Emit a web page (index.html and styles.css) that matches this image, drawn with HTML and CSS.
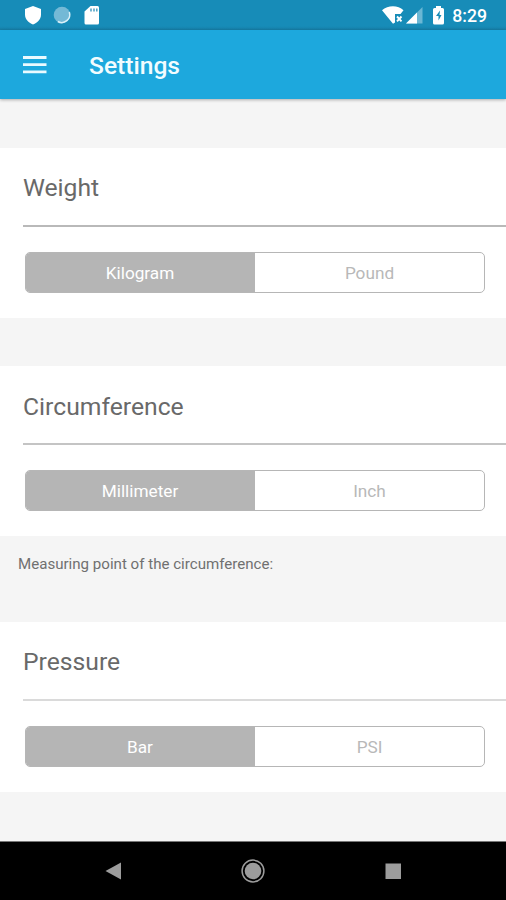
FILE: index.html
```html
<!DOCTYPE html>
<html lang="en">
<head>
<meta charset="utf-8">
<title>Settings</title>
<link rel="stylesheet" href="styles.css">
</head>
<body>
<div class="screen">
  <div class="status">
    <svg class="status-left" width="90" height="30" viewBox="0 0 90 30">
      <path fill="#fff" d="M17 6l8 3v5.500c0 4.500-3.300 8.200-8 10-4.700-1.800-8-5.500-8-10V9z"/>
      <circle cx="46" cy="15" r="8.300" fill="#74b9d6"/>
      <path d="M53.300 12a8 8 0 0 1-11.500 9.500" fill="none" stroke="#d9f0f8" stroke-width="1.500"/>
      <path fill="#fff" fill-rule="evenodd" d="M74.500 6H81.500q1.500 0 1.500 1.500v15.500q0 1.500-1.500 1.500H70q-1.500 0-1.500-1.500V11.500z"/>
      <path d="M75 8.500v3M78 8.500v3M80.800 8.500v3" stroke="#4aa0c3" stroke-width="1.500"/>
    </svg>
    <svg class="status-right" width="64" height="30" viewBox="0 0 64 30">
      <path fill="#fff" d="M0 10.300C6 5 16 5 21.500 10.300L18.500 14H13v8.500l-2 1.200z"/>
      <path d="M15 16.500l4.500 4.800M19.500 16.500l-4.500 4.800" stroke="#fff" stroke-width="1.900"/>
      <path fill="#6bb7d4" d="M40.500 7v16.500H24z"/>
      <path fill="#fff" d="M35 12.500v11H24z"/>
      <path fill="#fff" d="M54 6h5v2h1.500q1.500 0 1.500 1.500V23q0 1.500-1.500 1.500h-8Q51 24.500 51 23V9.500Q51 8 52.500 8H54z"/>
      <path fill="#178bb6" d="M58 10.500l-4 5.500h2.500v4.500l3-5.500h-2z"/>
    </svg>
    <span class="clock">8:29</span>
  </div>
  <header class="appbar">
    <svg class="menu" width="24" height="18" viewBox="0 0 24 18"><path fill="#eafaff" d="M0 0h23.500v2.900H0zM0 7.200h23.500v2.900H0zM0 14.400h23.500v2.900H0z"/></svg>
    <h1 class="title">Settings</h1>
  </header>
  <main class="content">
    <section class="panel">
      <h2 class="heading weight">Weight</h2>
      <div class="segmented"><div class="option selected">Kilogram</div><div class="option">Pound</div></div>
    </section>
    <div class="gap"></div>
    <section class="panel">
      <h2 class="heading circumference">Circumference</h2>
      <div class="segmented"><div class="option selected">Millimeter</div><div class="option">Inch</div></div>
    </section>
    <p class="note">Measuring point of the circumference:</p>
    <section class="panel">
      <h2 class="heading pressure">Pressure</h2>
      <div class="segmented"><div class="option selected">Bar</div><div class="option">PSI</div></div>
    </section>
  </main>
  <nav class="navbar">
    <svg width="24" height="24" viewBox="0 0 24 24"><path fill="#9c9c9c" d="M4.500 12L20 3.500v17z"/></svg>
    <svg width="24" height="24" viewBox="0 0 24 24"><circle cx="12" cy="12" r="10.900" fill="none" stroke="#9c9c9c" stroke-width="1.500"/><circle cx="12" cy="12" r="8.300" fill="#9c9c9c"/></svg>
    <svg width="24" height="24" viewBox="0 0 24 24"><path fill="#9c9c9c" d="M4.500 4.500h15.500v15.500H4.500z"/></svg>
  </nav>
</div>
</body>
</html>
```
FILE: styles.css
```css
* { box-sizing: border-box; }
body { margin: 0; font-family: Roboto, "Liberation Sans", sans-serif; }
h1, h2, p { margin: 0; font-weight: 400; }
svg { display: block; flex: none; }
.screen { width: 506px; height: 900px; display: flex; flex-direction: column; background: #f5f5f5; overflow: hidden; }
.status { height: 30px; flex: none; display: flex; padding: 0 18px 0 16px; background: linear-gradient(#178cb8 26px, #167ea7); color: #fff; }
.status-right { margin-left: auto; }
.clock { width: 41px; margin-right: 1px; padding-top: 1px; text-align: right; font-size: 17.7px; line-height: 30px; font-weight: 500; white-space: nowrap; }
.appbar { height: 69px; flex: none; display: flex; align-items: center; padding-left: 23px; background: #1da8dd; box-shadow: 0 1px 3px rgba(0, 0, 0, .3); position: relative; }
.title { margin: 2px 0 0 42px; font-size: 24.6px; line-height: 30px; font-weight: 500; color: #f2fcff; }
.content { flex: 1; padding-top: 49px; }
.panel { height: 170px; padding-left: 23px; background: #fff; }
.heading { height: 79px; padding-top: 1px; border-bottom: 2px solid #b9b9b9; font-size: 24.7px; line-height: 78px; color: #696969; }
.circumference { padding-top: 2px; border-color: #c4c4c4; }
.pressure { border-color: #dadada; }
.segmented { display: flex; width: 460px; height: 41px; margin: 25px 0 0 2px; border: 1px solid #b6b6b6; border-radius: 5px; overflow: hidden; }
.option { width: 50%; text-align: center; font-size: 17.2px; line-height: 40px; color: #b8b8b8; }
.selected { padding-right: 1px; background: #b5b5b5; color: #fff; }
.gap { height: 48px; }
.note { height: 86px; padding: 18px 0 0 18px; font-size: 15.1px; line-height: 20px; color: #707070; }
.navbar { height: 59px; flex: none; display: flex; justify-content: center; align-items: center; gap: 116px; background: #000; border-top: 1px solid #777; }
```
